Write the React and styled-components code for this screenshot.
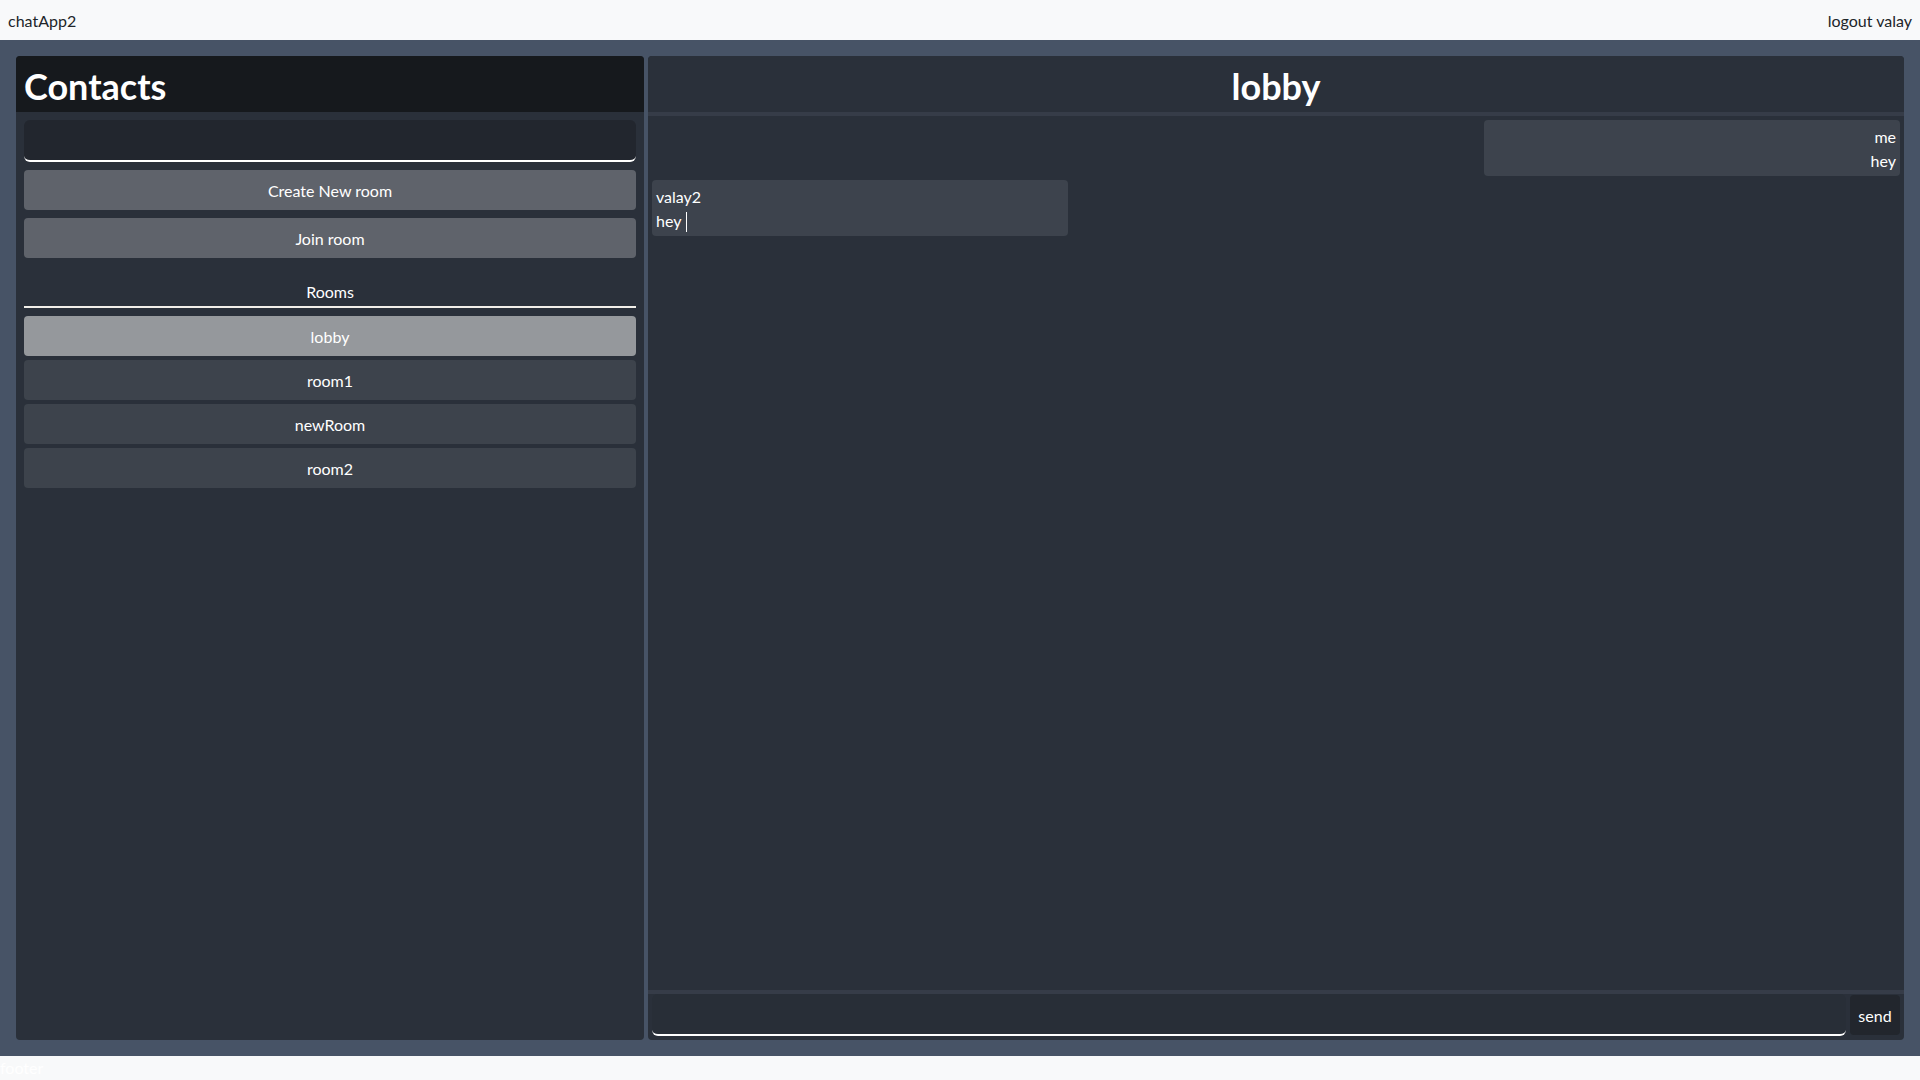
import { useState } from 'react';
import styled, { createGlobalStyle } from 'styled-components';

const GlobalStyle = createGlobalStyle`
  html, body, #root {
    height: 100%;
  }
  body {
    margin: 0;
    font-family: Lato, 'Open Sans', sans-serif;
    font-size: 16px;
    background: #f8f9fa;
    color: #212529;
  }
  * {
    box-sizing: border-box;
  }
`;

const Page = styled.div`
  display: flex;
  flex-direction: column;
  height: 100vh;
`;

const TopBar = styled.header`
  height: 40px;
  flex-shrink: 0;
  display: flex;
  justify-content: space-between;
  align-items: center;
  padding: 0 8px;
  background: #f8f9fa;
  color: #212529;
  font-size: 16px;
`;

const Main = styled.main`
  flex: 1;
  min-height: 0;
  display: grid;
  grid-template-columns: 1fr 2fr;
  gap: 4px;
  padding: 16px;
  background: #475366;
`;

const Footer = styled.footer`
  height: 24px;
  flex-shrink: 0;
  line-height: 24px;
  background: #f8f9fa;
  color: #ffffff;
`;

const Panel = styled.section`
  display: flex;
  flex-direction: column;
  min-height: 0;
  background: #2a303a;
  border-radius: 4px;
  overflow: hidden;
  color: #ffffff;
`;

const PanelHeader = styled.div`
  flex-shrink: 0;
  display: flex;
  align-items: center;
  justify-content: ${props => (props.center ? 'center' : 'flex-start')};
  padding: 3px 8px 0;
  background: ${props => (props.dark ? '#16191d' : '#2a303a')};
  border-bottom: ${props => (props.divider ? '4px solid #363c48' : 'none')};
  height: ${props => (props.divider ? '60px' : '56px')};
  font-size: 36px;
  font-weight: 700;
  color: #ffffff;
`;

const SideBody = styled.div`
  display: flex;
  flex-direction: column;
  padding: 8px;
`;

const SearchInput = styled.input`
  height: 42px;
  width: 100%;
  border: none;
  border-bottom: 2px solid #ffffff;
  border-radius: 6px;
  background: #22262e;
  color: #ffffff;
  padding: 0 12px;
  font: inherit;
  outline: none;
`;

const ActionButton = styled.button`
  height: 40px;
  margin-top: 8px;
  border: none;
  border-radius: 4px;
  background: #5f636b;
  color: #ffffff;
  font-family: inherit;
  font-size: 16px;
  cursor: pointer;
`;

const SectionLabel = styled.div`
  margin-top: 22px;
  line-height: 24px;
  padding-bottom: 2px;
  border-bottom: 2px solid #f1eee9;
  text-align: center;
  font-size: 16px;
`;

const RoomList = styled.div`
  display: flex;
  flex-direction: column;
  gap: 4px;
  margin-top: 8px;
`;

const RoomItem = styled.button`
  height: 40px;
  border: none;
  border-radius: 4px;
  background: ${props => (props.active ? '#95989c' : '#3d434c')};
  color: #ffffff;
  font-family: inherit;
  font-size: 16px;
  cursor: pointer;
`;

const Messages = styled.div`
  flex: 1;
  min-height: 0;
  display: flex;
  flex-direction: column;
  gap: 4px;
  padding: 4px;
  overflow-y: auto;
`;

const Message = styled.div`
  width: 33.3333%;
  align-self: ${props => (props.mine ? 'flex-end' : 'flex-start')};
  text-align: ${props => (props.mine ? 'right' : 'left')};
  padding: 5px 4px 3px;
  line-height: 24px;
  background: #3d434d;
  border-radius: 4px;
  font-size: 16px;
`;

const Caret = styled.span`
  display: inline-block;
  width: 1px;
  height: 20px;
  margin-left: 5px;
  vertical-align: -5px;
  background: #ffffff;
`;

const Composer = styled.form`
  flex-shrink: 0;
  display: flex;
  align-items: center;
  gap: 4px;
  padding: 0 4px 4px;
  border-top: 4px solid #363c48;
`;

const ChatInput = styled.input`
  flex: 1;
  height: 42px;
  border: none;
  border-bottom: 2px solid #ffffff;
  border-radius: 6px;
  background: #282e37;
  color: #ffffff;
  padding: 0 12px;
  font: inherit;
  outline: none;
`;

const SendButton = styled.button`
  width: 50px;
  height: 40px;
  border: none;
  border-radius: 4px;
  background: #22262d;
  color: #ffffff;
  font-family: inherit;
  font-size: 16px;
  cursor: pointer;
`;

const rooms = ['lobby', 'room1', 'newRoom', 'room2'];

const messages = [
  { id: 1, user: 'me', text: 'hey', mine: true },
  { id: 2, user: 'valay2', text: 'hey', mine: false, typing: true },
];

export default function App() {
  const [activeRoom, setActiveRoom] = useState('lobby');

  return (
    <>
      <GlobalStyle />
      <Page>
        <TopBar>
          <span>chatApp2</span>
          <span>logout valay</span>
        </TopBar>

        <Main>
          <Panel>
            <PanelHeader dark>Contacts</PanelHeader>
            <SideBody>
              <SearchInput />
              <ActionButton>Create New room</ActionButton>
              <ActionButton>Join room</ActionButton>
              <SectionLabel>Rooms</SectionLabel>
              <RoomList>
                {rooms.map(room => (
                  <RoomItem
                    key={room}
                    active={activeRoom === room}
                    onClick={() => setActiveRoom(room)}
                  >
                    {room}
                  </RoomItem>
                ))}
              </RoomList>
            </SideBody>
          </Panel>

          <Panel>
            <PanelHeader center divider>{activeRoom}</PanelHeader>
            <Messages>
              {messages.map(msg => (
                <Message key={msg.id} mine={msg.mine}>
                  <div>{msg.user}</div>
                  <div>
                    {msg.text}
                    {msg.typing && <Caret />}
                  </div>
                </Message>
              ))}
            </Messages>
            <Composer onSubmit={e => e.preventDefault()}>
              <ChatInput />
              <SendButton type="submit">send</SendButton>
            </Composer>
          </Panel>
        </Main>

        <Footer>footer</Footer>
      </Page>
    </>
  );
}
